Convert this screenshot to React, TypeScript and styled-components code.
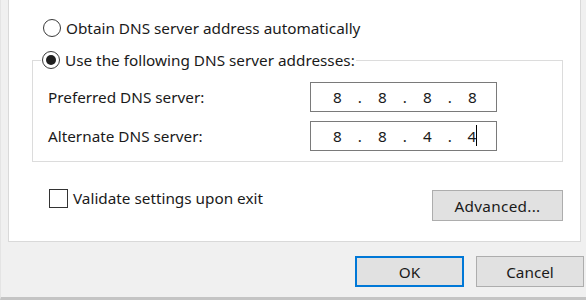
import React from 'react';
import styled, { createGlobalStyle } from 'styled-components';

const GlobalStyle = createGlobalStyle`
  html, body {
    margin: 0;
    padding: 0;
    background: #f0f0f0;
  }
  body {
    font-family: 'Noto Sans', 'Open Sans', 'Liberation Sans', sans-serif;
    font-size: 15.3px;
    color: #1a1a1a;
  }
`;

const Dialog = styled.div`
  width: 586px;
  height: 300px;
  box-sizing: border-box;
  background: #f0f0f0;
  border-left: 1px solid #e4e4e4;
  border-bottom: 3px solid #c4c4c4;
  display: flex;
  flex-direction: column;
  overflow: hidden;
`;

const TabPanel = styled.div`
  margin: 0 5px 0 7px;
  height: 242px;
  box-sizing: border-box;
  background: #fff;
  border: 1px solid #d9d9d9;
  border-top: none;
  padding: 18px 17px 0 23px;
  display: flex;
  flex-direction: column;
`;

const OptionRow = styled.label<{ $indent?: number }>`
  display: flex;
  align-items: center;
  gap: 5px;
  height: 20px;
  margin-left: ${(p) => p.$indent ?? 0}px;
  line-height: 20px;
  white-space: nowrap;
`;

const RadioMark = styled.span<{ $checked?: boolean }>`
  width: 18px;
  height: 18px;
  box-sizing: border-box;
  border-radius: 50%;
  border: 1px solid #3a3a3a;
  background: #fff;
  display: flex;
  align-items: center;
  justify-content: center;
  flex: none;

  &::after {
    content: '';
    display: ${(p) => (p.$checked ? 'block' : 'none')};
    width: 10px;
    height: 10px;
    border-radius: 50%;
    background: #1f1f1f;
  }
`;

const CheckMark = styled.span`
  width: 19px;
  height: 19px;
  box-sizing: border-box;
  border: 1px solid #333;
  background: #fff;
  flex: none;
`;

const GroupBox = styled.fieldset`
  margin: 12px 0 0 0;
  padding: 0 15px 10px 15px;
  border: 1px solid #dcdcdc;
  min-width: 0;
`;

const GroupLegend = styled.legend`
  margin-left: -7px;
  padding: 0 1px;
  height: 20px;
`;

const FieldGrid = styled.div`
  margin-top: 12px;
  display: grid;
  grid-template-columns: 262px 187px;
  row-gap: 9px;
  align-items: center;
`;

const FieldLabel = styled.span`
  white-space: nowrap;
`;

const IpBox = styled.div`
  height: 30px;
  box-sizing: border-box;
  border: 1px solid #7a7a7a;
  background: #fff;
  padding-left: 15px;
  display: flex;
  align-items: center;
`;

const IpCell = styled.span`
  width: 22.5px;
  flex: none;
  text-align: center;
  white-space: nowrap;
`;

const Caret = styled.span`
  display: inline-block;
  width: 1px;
  height: 21px;
  background: #000;
  vertical-align: middle;
  margin-top: -3px;
`;

const BottomRow = styled.div`
  margin-top: 26px;
  display: flex;
  justify-content: space-between;
  align-items: flex-start;
`;

const PushButton = styled.button<{ $width: number; $default?: boolean }>`
  width: ${(p) => p.$width}px;
  height: 31px;
  box-sizing: border-box;
  background: #e1e1e1;
  border: ${(p) => (p.$default ? '2px solid #0078d7' : '1px solid #adadad')};
  font: inherit;
  color: #1a1a1a;
  padding: 0;
  cursor: default;
`;

const AdvancedButton = styled(PushButton)`
  margin-top: 2px;
  letter-spacing: 0.3px;
`;

const Footer = styled.div`
  margin-top: 14px;
  padding-right: 2px;
  display: flex;
  justify-content: flex-end;
  gap: 12px;
`;

const IpField = ({ octets, caret }: { octets: string[]; caret?: boolean }) => (
  <IpBox>
    {octets.map((o, i) => (
      <React.Fragment key={i}>
        {i > 0 && <IpCell>.</IpCell>}
        <IpCell>
          {o}
          {caret && i === octets.length - 1 && <Caret />}
        </IpCell>
      </React.Fragment>
    ))}
  </IpBox>
);

export default function App() {
  return (
    <>
      <GlobalStyle />
      <Dialog>
        <TabPanel>
          <OptionRow $indent={11}>
            <RadioMark />
            <span>Obtain DNS server address automatically</span>
          </OptionRow>
          <GroupBox>
            <GroupLegend>
              <OptionRow>
                <RadioMark $checked />
                <span>Use the following DNS server addresses:</span>
              </OptionRow>
            </GroupLegend>
            <FieldGrid>
              <FieldLabel>Preferred DNS server:</FieldLabel>
              <IpField octets={['8', '8', '8', '8']} />
              <FieldLabel>Alternate DNS server:</FieldLabel>
              <IpField octets={['8', '8', '4', '4']} caret />
            </FieldGrid>
          </GroupBox>
          <BottomRow>
            <OptionRow $indent={17}>
              <CheckMark />
              <span>Validate settings upon exit</span>
            </OptionRow>
            <AdvancedButton $width={131}>Advanced...</AdvancedButton>
          </BottomRow>
        </TabPanel>
        <Footer>
          <PushButton $width={109} $default>
            OK
          </PushButton>
          <PushButton $width={108}>Cancel</PushButton>
        </Footer>
      </Dialog>
    </>
  );
}
